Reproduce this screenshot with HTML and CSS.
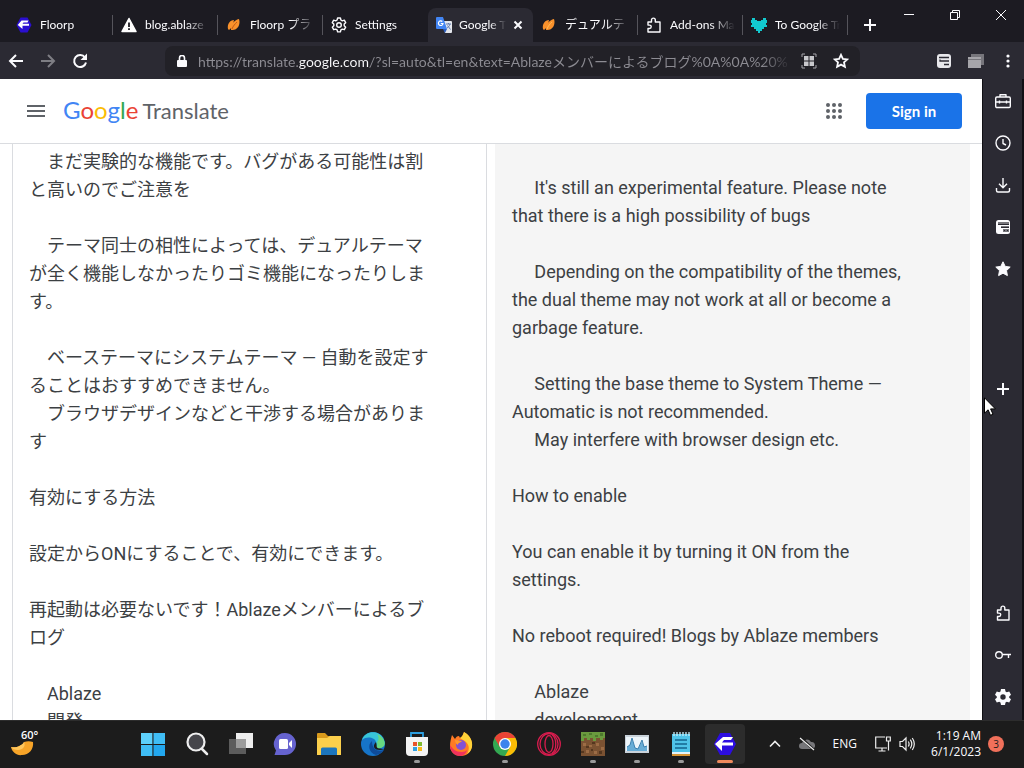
FILE: index.html
```html
<!DOCTYPE html>
<html lang="en">
<head>
  <meta charset="UTF-8">
  <meta name="viewport" content="width=device-width, initial-scale=1.0">
  <title>Google Translate</title>
  <link rel="stylesheet" href="styles.css">
</head>
<body>

  <!-- Tabs -->
  <div class="tab-bar">
    <div class="tabs">
      <button class="tab">
        <svg class="icon" viewBox="0 0 16 16"><path fill="#2a0fd0" d="M4.500 0.500h7L15.500 8l-4 7.500h-7L.5 8z"/><path fill="#fff" d="M5.500 3.500h7L11.500 5.500H7.500l-1 1.300H13v2H6.500V12L1.800 8z"/></svg>
        <span class="tab-label">Floorp</span>
      </button>
      <button class="tab">
        <svg class="icon" viewBox="0 0 16 16"><path fill="#fff" d="M8 1.500L15 14.500H1z" stroke="#fff" stroke-width="1.500" stroke-linejoin="round"/><path stroke="#1c1b22" stroke-width="1.800" d="M8 5.500v4.500M8 11.300v1.700"/></svg>
        <span class="tab-label">blog.ablaze</span>
      </button>
      <button class="tab">
        <svg class="icon" viewBox="0 0 16 16"><path fill="#f9912b" d="M2 12C1 7 4 3 8 3c-1 4-2 8-5 10zM5 13c0-5 3-10 8-11 2 6-2 12-8 11z"/><path stroke="#c35a15" fill="none" d="M6 12c1-3 3-5 5-7"/></svg>
        <span class="tab-label">Floorp プラ</span>
      </button>
      <button class="tab no-line">
        <svg class="icon line-icon" viewBox="0 0 16 16"><circle cx="8" cy="8" r="2.300"/><path d="M6.600 1h2.800l.5 2 1.400.8 2-.6 1.400 2.500-1.500 1.400v1.700l1.500 1.400-1.400 2.500-2-.6-1.400.8-.5 2H6.600l-.5-2-1.400-.8-2 .6-1.400-2.500 1.500-1.400V7.100L1.300 5.700l1.400-2.500 2 .6L6.100 3z"/></svg>
        <span class="tab-label">Settings</span>
      </button>
      <button class="tab active no-line">
        <svg class="icon" viewBox="0 0 16 16"><path fill="#e4e7ed" d="M7 4h8q1 0 1 1v10q0 1-1 1H9z"/><path fill="#4285f4" d="M1 0h6l4 12H1q-1 0-1-1V1q0-1 1-1z"/><path fill="#2a5dc0" d="M7 12h4l-2 4z"/><path stroke="#fff" fill="none" stroke-width="1.200" d="M6.300 4.500A2.300 2.300 0 1 0 7 6.500H4.800"/><path stroke="#627bb0" fill="none" d="M10 7h5M12.500 6v1M14 7c-.5 2-2 3.500-3 4M11.500 8.500l3 4"/></svg>
        <span class="tab-label">Google Tr</span>
        <svg class="close" viewBox="0 0 10 10"><path d="M1.500 1.500l7 7M8.500 1.500l-7 7"/></svg>
      </button>
      <button class="tab">
        <svg class="icon" viewBox="0 0 16 16"><path fill="#f9912b" d="M2 12C1 7 4 3 8 3c-1 4-2 8-5 10zM5 13c0-5 3-10 8-11 2 6-2 12-8 11z"/><path stroke="#ffbd58" fill="none" d="M6 12c1-3 3-5 5-7"/></svg>
        <span class="tab-label">デュアルテ</span>
      </button>
      <button class="tab">
        <svg class="icon line-icon" viewBox="0 0 16 16"><path d="M2 15V11.500h1.500a1.700 1.700 0 0 0 0-3.400H2V5h3.500V3a1.900 1.900 0 0 1 3.800 0v2H14v10z"/></svg>
        <span class="tab-label">Add-ons Ma</span>
      </button>
      <button class="tab">
        <svg class="icon" viewBox="0 0 16 16"><path fill="#12c9cf" d="M1 1h3v2h2v1h4V3h2V1h3v2h1v3h-1v2h1v2h-3v2h-2v2H9v2H7v-2H5v-2H3v-2H0V8h1V6H0V3h1z"/></svg>
        <span class="tab-label">To Google Tr</span>
      </button>
    </div>
    <button class="new-tab" aria-label="New tab"><svg viewBox="0 0 12 12"><path d="M6 0v12M0 6h12"/></svg></button>
    <div class="window-buttons">
      <button aria-label="Minimize"><svg viewBox="0 0 10 10"><path d="M0 4.500h10"/></svg></button>
      <button aria-label="Restore"><svg viewBox="0 0 10 10"><path d="M.5 2.500h7v7h-7zM2.500 2.500v-2h7v7h-2"/></svg></button>
      <button aria-label="Close"><svg viewBox="0 0 10 10"><path d="M0 0l10 10M10 0L0 10"/></svg></button>
    </div>
  </div>

  <!-- Navigation toolbar -->
  <div class="toolbar">
    <div class="nav-buttons">
      <button aria-label="Back"><svg class="icon nav" viewBox="0 0 16 16"><path d="M15 8H2M8 2L2 8l6 6"/></svg></button>
      <button aria-label="Forward" class="disabled"><svg class="icon nav" viewBox="0 0 16 16"><path d="M1 8h13M8 2l6 6-6 6"/></svg></button>
      <button aria-label="Reload"><svg class="icon nav" viewBox="0 0 16 16"><path d="M13 4.500A6 6 0 1 0 14 9.500"/><path class="solid" d="M15 0.500V7H8.500z"/></svg></button>
    </div>
    <div class="url-bar">
      <svg class="lock" viewBox="0 0 10 12"><path fill="#fbfbfe" d="M1 5h8q1 0 1 1v5q0 1-1 1H1q-1 0-1-1V6q0-1 1-1z"/><path fill="none" stroke="#fbfbfe" stroke-width="1.600" d="M2.500 6V3a2.500 2.500 0 0 1 5 0v3"/></svg>
      <input class="url" type="text" aria-label="Address" value="https://translate.google.com/?sl=auto&amp;tl=en&amp;text=Ablazeメンバーによるブログ%0A%0A%20%">
      <button aria-label="QR code"><svg class="icon" viewBox="0 0 16 16"><path fill="#c8c8cc" d="M3 3h4.500v4.500H3zM8.500 3H13v4.500H8.500zM3 8.500h4.500V13H3zM8.500 8.500H13V13H8.500z"/><path fill="none" stroke="#a5a5aa" d="M1 4V1h3M12 1h3v3M15 12v3h-3M4 15H1v-3"/></svg></button>
      <button aria-label="Bookmark"><svg class="icon star" viewBox="0 0 16 16"><path d="M8 1.800l1.900 4.100 4.400.5-3.300 3 .9 4.400L8 11.600l-3.900 2.200.9-4.400-3.300-3 4.400-.5z"/></svg></button>
    </div>
    <div class="tool-buttons">
      <button aria-label="Tree tabs"><svg class="icon" viewBox="0 0 16 16"><rect x="1" y="1" width="14" height="14" rx="3" fill="#e8e8ec"/><path stroke="#2b2a33" stroke-width="1.300" fill="none" d="M3 4.500h10M6 8h7M8 11.500h5M4 6.500v1.500h2"/></svg></button>
      <button aria-label="Workspaces"><svg class="icon" viewBox="0 0 16 16"><path fill="#77767c" d="M3 1h13v11H3z"/><path fill="#a6a5aa" d="M0 4h13v11H0z"/><path stroke="#77767c" d="M0 6.500h13"/></svg></button>
      <button aria-label="Menu"><svg class="icon" viewBox="0 0 16 16"><g fill="#fbfbfe"><circle cx="8" cy="3" r="1.600"/><circle cx="8" cy="8" r="1.600"/><circle cx="8" cy="13" r="1.600"/></g></svg></button>
    </div>
  </div>

  <div class="main">
    <div class="page">
      <header class="page-header">
        <button class="menu" aria-label="Main menu"><svg viewBox="0 0 18 12"><path fill="#5f6368" d="M0 0h18v2H0zM0 5h18v2H0zM0 10h18v2H0z"/></svg></button>
        <a class="logo" href="#"><span class="google"><span class="blue">G</span><span class="red">o</span><span class="yellow">o</span><span class="blue">g</span><span class="green">l</span><span class="red">e</span></span><span class="product">Translate</span></a>
        <button class="apps" aria-label="Google apps"><svg viewBox="0 0 16 16"><g fill="#5f6368"><circle cx="2" cy="2" r="2"/><circle cx="8" cy="2" r="2"/><circle cx="14" cy="2" r="2"/><circle cx="2" cy="8" r="2"/><circle cx="8" cy="8" r="2"/><circle cx="14" cy="8" r="2"/><circle cx="2" cy="14" r="2"/><circle cx="8" cy="14" r="2"/><circle cx="14" cy="14" r="2"/></g></svg></button>
        <button class="sign-in">Sign in</button>
      </header>

      <div class="panels">
        <textarea class="source" lang="ja" aria-label="Source text">　まだ実験的な機能です。バグがある可能性は割と高いのでご注意を

　テーマ同士の相性によっては、デュアルテーマが全く機能しなかったりゴミ機能になったりします。

　ベーステーマにシステムテーマ — 自動を設定することはおすすめできません。
　ブラウザデザインなどと干渉する場合があります

有効にする方法

設定からONにすることで、有効にできます。

再起動は必要ないです！Ablazeメンバーによるブログ

　Ablaze
　開発</textarea>
        <div class="result">     It's still an experimental feature. Please note that there is a high possibility of bugs

     Depending on the compatibility of the themes, the dual theme may not work at all or become a garbage feature.

     Setting the base theme to System Theme — Automatic is not recommended.
     May interfere with browser design etc.

How to enable

You can enable it by turning it ON from the settings.

No reboot required! Blogs by Ablaze members

     Ablaze
     development</div>
      </div>
    </div>

    <!-- Browser sidebar -->
    <div class="sidebar">
      <button aria-label="Browser manager"><svg class="icon line-icon" viewBox="0 0 16 16"><rect x=".7" y="4" width="14.600" height="10.500" rx="1.200"/><path d="M5 4V1.700h6V4M1 9h14M4.500 7.500v3M11.500 7.500v3"/></svg></button>
      <button aria-label="History"><svg class="icon line-icon" viewBox="0 0 16 16"><circle cx="8" cy="8" r="7"/><path d="M8 4v4.500l3 1.500"/></svg></button>
      <button aria-label="Downloads"><svg class="icon line-icon" viewBox="0 0 16 16"><path d="M8 1v9.500M4 6.800l4 4 4-4M1.500 11v2.500q0 1.500 1.500 1.500h10q1.500 0 1.500-1.500V11"/></svg></button>
      <button aria-label="Tree style tab"><svg class="icon" viewBox="0 0 16 16"><rect x="1" y="1" width="14" height="14" rx="2.500" fill="#fbfbfe"/><path fill="#77767c" d="M3 3h11v3H3zM6 7h8v2H6zM8 10h6v3H8z"/><path stroke="#2b2a33" d="M3 5.500h11M6 8.500h8M9 11.500h1M12 11.500h1"/></svg></button>
      <button aria-label="Bookmarks"><svg class="icon" viewBox="0 0 16 16"><path fill="#fbfbfe" stroke="#fbfbfe" stroke-linejoin="round" d="M8 .8l2.200 4.600 5 .7-3.700 3.500.9 5L8 12.200l-4.400 2.400.9-5L.8 6.100l5-.7z"/></svg></button>
      <button class="add-panel" aria-label="Add panel"><svg class="icon line-icon thick" viewBox="0 0 16 16"><path d="M8 2v12M2 8h12"/></svg></button>
      <span class="spacer"></span>
      <button aria-label="Add-ons"><svg class="icon line-icon" viewBox="0 0 16 16"><path d="M2.500 15V11.500h1.500a1.700 1.700 0 0 0 0-3.400H2.500V5h3.500V3a1.900 1.900 0 0 1 3.800 0v2h4.200v10z"/></svg></button>
      <button aria-label="Passwords"><svg class="icon line-icon" viewBox="0 0 16 16"><circle cx="4" cy="8" r="3.300"/><path d="M7.300 7.500H16M13.500 7.500V11"/></svg></button>
      <button aria-label="Settings"><svg class="icon" viewBox="0 0 16 16"><path fill="#fbfbfe" fill-rule="evenodd" d="M6 0h4l.5 2.500 1.300.8L14.200 2.500l1.800 3.300L14.200 7.400v1.300L16 10.300l-1.800 3.300-2.400-.9-1.300.8L10 16H6l-.5-2.500-1.300-.8-2.400.9L0 10.300l1.800-1.600V7.400L0 5.800l1.800-3.300 2.400.8 1.300-.8zM8 5.300a2.700 2.700 0 1 0 0 5.400 2.700 2.700 0 0 0 0-5.400z"/></svg></button>
    </div>

    <svg class="cursor" viewBox="0 0 12 19"><path fill="#fff" stroke="#000" d="M.5.800v15.400l3.600-3.400 2.400 5.500 2.500-1.100-2.400-5.300h4.800z"/></svg>
  </div>

  <!-- Taskbar -->
  <div class="taskbar">
    <button class="weather"><svg class="moon" viewBox="0 0 24 16"><path fill="#f7a428" d="M0 6c5 1 11-1 13-5 3-1 6-1 9 0 1 7-4 13-11 13C6 15 1 11 0 6z"/><path fill="#ffc65c" d="M0 6c5 1 11-1 13-5 2 4-1 8-6 8-3 0-6-1-7-3z"/></svg><span>60°</span></button>

    <div class="task-icons">
      <button aria-label="Start"><svg viewBox="0 0 24 24"><path fill="#5dd0fb" d="M0 1h11.400v11H0z"/><path fill="#3fbdf5" d="M12.500 1H24v11H12.500zM0 13h11.400v11H0z"/><path fill="#22a7ee" d="M12.500 13H24v11H12.500z"/></svg></button>
      <button aria-label="Search"><svg viewBox="0 0 24 24"><circle cx="11" cy="10" r="8.500" fill="#45454a" stroke="#eee" stroke-width="2.200"/><path stroke="#eee" stroke-width="2.500" stroke-linecap="round" d="M17 17l5 5"/></svg></button>
      <button aria-label="Task view"><svg viewBox="0 0 24 24"><path fill="#ededed" d="M7 1h17v15H7z"/><path fill="#5c5c5c" d="M0 7h17v15H0z"/><path fill="#9b9b9b" d="M7 7h10v9H7z"/></svg></button>
      <button aria-label="Chat"><svg viewBox="0 0 24 24"><path fill="#6663cf" d="M12 1a11 11 0 1 1 0 22H1.500l1.500-4.500A11 11 0 0 1 12 1z"/><rect x="6" y="7" width="9" height="10" rx="1.500" fill="#fff"/><path fill="#fff" d="M16 11l3-3v8l-3-3z"/></svg></button>
      <button aria-label="File Explorer"><svg viewBox="0 0 24 24"><path fill="#d99a1c" d="M0 2q0-1 1-1h7l3 3h9v6H0z"/><path fill="#fbcf4c" d="M0 6h10l3-2h11q1 0 1 1v18H0z"/><path fill="#1d76bd" d="M4 23v-6q0-1.500 1.500-1.500h13q1.500 0 1.500 1.500v6z"/></svg></button>
      <button aria-label="Edge"><svg viewBox="0 0 24 24"><circle cx="12" cy="12" r="12" fill="#1674c8"/><path fill="#38c5d8" d="M1 8C4-2 18-2 22 6c4 7-1 11-6 10-4-1-1-3-1-6C14 5 5 4 1 8z"/><path fill="#67d880" d="M16 2c7 3 9 9 7 12-2 2-5 3-8 2 1-1 2-3 1-6 2-2 2-5 0-8z"/><path fill="#0e4b9a" d="M11 9c-5 4-3 12 4 14 4-1 6-2 8-5-6 2-12 0-12-9z"/><path fill="#1c1c1c" d="M15 10c2 5-2 6 7 7 1 0 2-1 1 0-6 3-14-1-8-7z"/></svg></button>
      <button aria-label="Microsoft Store" class="running"><svg viewBox="0 0 24 24"><path fill="none" stroke="#2d9fe0" stroke-width="1.800" d="M6 7V1h12v6"/><path fill="#f4f4f4" d="M1 5h22v15q0 4-4 4H5q-4 0-4-4z"/><path fill="#e8542c" d="M8 10h4v4H8z"/><path fill="#7fb92e" d="M13 10h4v4h-4z"/><path fill="#2f9fe3" d="M8 15h4v4H8z"/><path fill="#f8b817" d="M13 15h4v4h-4z"/></svg></button>
      <button aria-label="Firefox"><svg viewBox="0 0 24 24"><path fill="#ff7a25" d="M3 3l3 4c1-2 2-3 4-3l1 2c2-1 3-3 4-6 3 2 9 7 8 14-1 6-5 10-11 10S1 20 1 14c0-4 1-8 2-11z"/><path fill="#ffd238" d="M15 0c6 3 9 9 8 15-1 4-3 6-5 7 3-5 2-9-1-12-2-2-5-3-6-4 2-1 3-3 4-6z"/><path fill="#f0325c" d="M1 13c3 4 5 7 12 7 2 0 4-1 5-2-1 4-4 6-7 6-6 0-10-5-10-11z"/><circle cx="12" cy="13" r="5" fill="#8252d4"/><path fill="#ff9a2a" d="M6 8c3 0 5 1 7 1-1 2-4 1-4 4-2-1-3-3-3-5z"/></svg></button>
      <button aria-label="Chrome" class="running"><svg viewBox="0 0 24 24"><circle cx="12" cy="12" r="12" fill="#33a852"/><path fill="#ea4335" d="M1.600 6A12 12 0 0 1 22.400 6H12L6.800 15z"/><path fill="#fbbc05" d="M22.400 6A12 12 0 0 1 12 24l5.200-9L12 6z"/><circle cx="12" cy="12" r="6" fill="#fff"/><circle cx="12" cy="12" r="4.700" fill="#3b82ed"/></svg></button>
      <button aria-label="Opera GX"><svg viewBox="0 0 24 24"><g fill="none" stroke="#d91c4e" stroke-width="1.300"><circle cx="12" cy="12" r="11.300"/><ellipse cx="12" cy="12" rx="9" ry="10.500"/><ellipse cx="12" cy="12" rx="4" ry="8.500"/><path d="M15 3c5 3 5 15 0 18"/></g></svg></button>
      <button aria-label="Minecraft" class="running"><svg viewBox="0 0 24 24"><path fill="#7b5232" d="M0 0h24v24H0z"/><path fill="#6a9a3e" d="M0 0h24v6h-2v2h-3V6h-4v3h-3V6H9v2H6V6H3v3H0z"/><path fill="#4e7a2d" d="M2 2h3v2H2zM8 1h3v2H8zM14 3h3v2h-3zM19 1h3v3h-3z"/><path fill="#9c6c45" d="M2 11h3v3H2zM8 13h3v2H8zM15 11h3v3h-3zM20 15h3v3h-3zM5 18h3v3H5zM13 19h3v3h-3z"/><path fill="#55371f" d="M5 14h3v2H5zM11 10h3v2h-3zM18 19h3v3h-3zM0 19h3v2H0zM10 17h2v2h-2z"/></svg></button>
      <button aria-label="Task Manager" class="running"><svg viewBox="0 0 24 24"><path fill="#c9d2da" d="M0 3h24v18H0z"/><path fill="#edf5fa" d="M1 5h22v14H1z"/><path fill="#68add6" d="M2 19v-4l3-2 2-6 3 9 3 1 4-8 2 6 3-1v5z"/><path fill="none" stroke="#397fae" d="M2 15l3-2 2-7 3 10 3 1 4-9 2 7 3-1"/></svg></button>
      <button aria-label="Notepad" class="running"><svg viewBox="0 0 24 24"><path fill="#4fc3e8" d="M3 2h18v20H3z"/><path fill="#e4f3f8" d="M3 20h18v2H3z"/><path fill="#d69434" d="M3 22h18v2H3z"/><path stroke="#14668e" stroke-width="1.600" d="M6 8h12M6 12h12M6 16h12"/><path stroke="#c8eefa" stroke-width="1.300" d="M5 0v4M8 0v4M11 0v4M14 0v4M17 0v4M20 0v4"/></svg></button>
      <button aria-label="Floorp" class="running current"><svg viewBox="0 0 24 24"><path fill="#2c0de0" d="M7 1h10l6 11-6 11H7L1 12z"/><path fill="#fff" d="M10 5h10l-2 3h-7l-2 2.500h11v3H9V19l-7-7z"/></svg></button>
    </div>

    <div class="tray">
      <button aria-label="Show hidden icons"><svg class="chevron" viewBox="0 0 12 8"><path d="M1 6.500l5-5 5 5"/></svg></button>
      <button aria-label="OneDrive"><svg class="icon" viewBox="0 0 16 16"><path fill="#77777a" d="M3 13a3 3 0 0 1 0-6 5 5 0 0 1 9-1 3.500 3.500 0 0 1 1 7z"/><path stroke="#1c1c1c" stroke-width="2.500" d="M1 1l14 13"/><path stroke="#eee" stroke-width="1.200" d="M1 2l14 12"/></svg></button>
      <button class="lang">ENG</button>
      <button class="status" aria-label="Network and volume">
        <svg class="icon" viewBox="0 0 16 16"><path fill="none" stroke="#eee" stroke-width="1.200" d="M10 1H.7v11H12M7 12v3M3.500 15h7M11.500 1h3.800v4h-3.800zM13.500 5v9.500"/></svg>
        <svg class="icon" viewBox="0 0 16 16"><path fill="none" stroke="#eee" stroke-width="1.200" d="M1 5.500v5h2.500L7 14V2L3.500 5.500zM9.300 5.500q1.600 2.500 0 5M11.300 3.700q3 4.300 0 8.600M13.300 2q4 6 0 12"/></svg>
      </button>
      <button class="clock"><span>1:19 AM</span><span>6/1/2023</span></button>
      <span class="badge">3</span>
    </div>
  </div>

</body>
</html>
```
FILE: styles.css
```css
* {
  box-sizing: border-box;
}

body {
  margin: 0;
  height: 100vh;
  display: flex;
  flex-direction: column;
  overflow: hidden;
  background: #1c1b22;
  color: #fbfbfe;
  font-family: Lato, "Noto Sans CJK JP", sans-serif;
  font-size: 12px;
}

button {
  display: flex;
  align-items: center;
  justify-content: center;
  padding: 0;
  border: none;
  background: none;
  color: inherit;
  font: inherit;
  flex: none;
}

svg {
  display: block;
  flex: none;
}

.icon {
  width: 16px;
  height: 16px;
}

.line-icon {
  fill: none;
  stroke: #fbfbfe;
  stroke-width: 1.4;
  stroke-linejoin: round;
}

.thick {
  stroke-width: 2;
}

/* Tabs */
.tab-bar {
  display: flex;
  height: 42px;
  flex: none;
}

.tabs {
  display: flex;
  padding: 8px 0 0 8px;
}

.tab {
  position: relative;
  width: 105px;
  padding: 0 8px;
  gap: 8px;
  justify-content: flex-start;
}

.tab::after {
  content: "";
  position: absolute;
  right: 0;
  top: 7px;
  width: 1px;
  height: 20px;
  background: #55545b;
}

.no-line::after {
  display: none;
}

.tab.active {
  gap: 7px;
  background: #2b2a33;
  border-radius: 8px 8px 0 0;
}

.tab-label {
  flex: 1;
  min-width: 0;
  overflow: hidden;
  white-space: nowrap;
  text-align: left;
  line-height: 20px;
  mask-image: linear-gradient(to left, transparent, #000 24px);
}

.active .tab-label {
  mask-image: linear-gradient(to left, transparent, #000 16px);
}

.close {
  width: 10px;
  height: 10px;
  margin-right: 2px;
  stroke: #fbfbfe;
  stroke-width: 2;
}

.new-tab {
  width: 38px;
  padding: 8px 0 0 6px;
}

.new-tab svg {
  width: 12px;
  height: 12px;
  stroke: #fbfbfe;
  stroke-width: 2;
}

.window-buttons {
  display: flex;
  margin-left: auto;
  height: 30px;
}

.window-buttons button {
  width: 46px;
}

.window-buttons svg {
  width: 10px;
  height: 10px;
  fill: none;
  stroke: #fbfbfe;
}

/* Toolbar */
.toolbar {
  display: flex;
  align-items: center;
  height: 37px;
  flex: none;
  background: #2b2a33;
}

.toolbar button {
  width: 32px;
  height: 32px;
}

.nav-buttons,
.tool-buttons {
  display: flex;
  flex: none;
}

.nav {
  fill: none;
  stroke: #fbfbfe;
  stroke-width: 2;
}

.nav .solid {
  fill: #fbfbfe;
  stroke: none;
}

.disabled {
  opacity: 0.4;
}

.url-bar {
  display: flex;
  align-items: center;
  flex: 1;
  min-width: 0;
  height: 30px;
  margin: 0 68px 0 69px;
  padding: 0 3px 0 12px;
  border-radius: 8px;
  background: #222127;
}

.lock {
  width: 10px;
  height: 12px;
  margin-right: 11px;
}

/* host part is brighter than the rest of the address */
.url {
  flex: 1;
  min-width: 0;
  height: 28px;
  padding: 0;
  border: none;
  outline: none;
  font: inherit;
  font-size: 14px;
  color: transparent;
  background: linear-gradient(to right, #8d8c93 101px, #fbfbfe 101px, #fbfbfe 172px, #8d8c93 172px, #8d8c93 calc(100% - 32px), transparent);
  background-clip: text;
}

.star {
  fill: none;
  stroke: #fbfbfe;
  stroke-width: 1.8;
}

/* Page */
.main {
  position: relative;
  display: flex;
  flex: 1;
  min-height: 0;
}

.page {
  display: flex;
  flex-direction: column;
  flex: 1;
  min-width: 0;
  background: #fff;
}

.page-header {
  display: flex;
  align-items: center;
  flex: none;
  height: 65px;
  padding: 0 20px 0 27px;
  border-bottom: 1px solid #dadce0;
}

.menu svg {
  width: 18px;
  height: 12px;
}

.logo {
  display: flex;
  align-items: baseline;
  gap: 4px;
  margin-left: 18px;
  padding-bottom: 4px;
  font-size: 22px;
  color: #5f6368;
  text-decoration: none;
}

.google {
  font-size: 24px;
}

.blue {
  color: #4285f4;
}

.red {
  color: #ea4335;
}

.yellow {
  color: #fbbc05;
}

.green {
  color: #34a853;
}

.apps {
  margin-left: auto;
  margin-right: 24px;
}

.apps svg {
  width: 16px;
  height: 16px;
}

.sign-in {
  width: 96px;
  height: 36px;
  border-radius: 4px;
  background: #1a73e8;
  color: #fff;
  font-size: 15px;
  font-weight: bold;
}

.panels {
  display: grid;
  grid-template-columns: 1fr 1fr;
  gap: 8px;
  flex: 1;
  min-height: 0;
  padding: 0 12px;
  font-family: Roboto, "Noto Sans CJK JP", sans-serif;
  font-size: 18px;
  line-height: 28px;
  color: #3c4043;
}

.source {
  padding: 4px 52px 0 16px;
  border: solid #dadce0;
  border-width: 0 1px;
  outline: none;
  resize: none;
  overflow: hidden;
  background: #fff;
  color: inherit;
  font: inherit;
}

.result {
  padding: 30px 56px 0 17px;
  overflow: hidden;
  white-space: pre-wrap;
  background: #f5f5f5;
}

/* Sidebar */
.sidebar {
  display: flex;
  flex-direction: column;
  flex: none;
  width: 42px;
  padding: 1px 0 2px;
  border-left: 1px solid #111015;
  border-right: 2px solid #111015;
  background: #2b2a33;
}

.sidebar button {
  height: 42px;
}

.sidebar .add-panel {
  margin-top: 78px;
}

.spacer {
  flex: 1;
}

.cursor {
  position: absolute;
  right: 28px;
  top: 318px;
  width: 12px;
  height: 19px;
}

/* Taskbar */
.taskbar {
  display: flex;
  align-items: center;
  flex: none;
  height: 48px;
  padding-bottom: 2px;
  border-top: 1px solid #2d2d2d;
  background: #1c1c1c;
  font-family: "Open Sans", sans-serif;
  font-size: 12px;
}

.weather {
  position: relative;
  width: 133px;
  height: 40px;
  padding-left: 11px;
  justify-content: flex-start;
}

.moon {
  width: 24px;
  height: 16px;
  margin-top: 10px;
}

.weather span {
  position: absolute;
  left: 21px;
  top: 3px;
  font-size: 11px;
  font-weight: 600;
}

.task-icons {
  display: flex;
  gap: 4px;
}

.task-icons button {
  position: relative;
  width: 40px;
  height: 40px;
  border-radius: 4px;
}

.task-icons svg {
  width: 24px;
  height: 24px;
}

.running::after {
  content: "";
  position: absolute;
  left: 17px;
  bottom: 1px;
  width: 6px;
  height: 3px;
  border-radius: 2px;
  background: #9a9a9a;
}

.task-icons .current {
  background: #2c2c2c;
}

.current::after {
  left: 12px;
  width: 16px;
  background: #f08a5d;
}

.tray {
  display: flex;
  align-items: center;
  margin-left: auto;
  padding-right: 20px;
}

.tray button {
  height: 40px;
}

.chevron {
  width: 12px;
  height: 8px;
  margin-right: 18px;
  fill: none;
  stroke: #eee;
  stroke-width: 1.6;
}

.lang {
  padding: 0 18px;
}

.status {
  gap: 8px;
  margin-right: 16px;
}

.tray .clock {
  flex-direction: column;
  align-items: flex-end;
  line-height: 16px;
}

.badge {
  width: 16px;
  height: 16px;
  margin-left: 7px;
  border-radius: 8px;
  background: #f0705a;
  color: #1c1c1c;
  font-size: 10px;
  line-height: 16px;
  text-align: center;
}
```
